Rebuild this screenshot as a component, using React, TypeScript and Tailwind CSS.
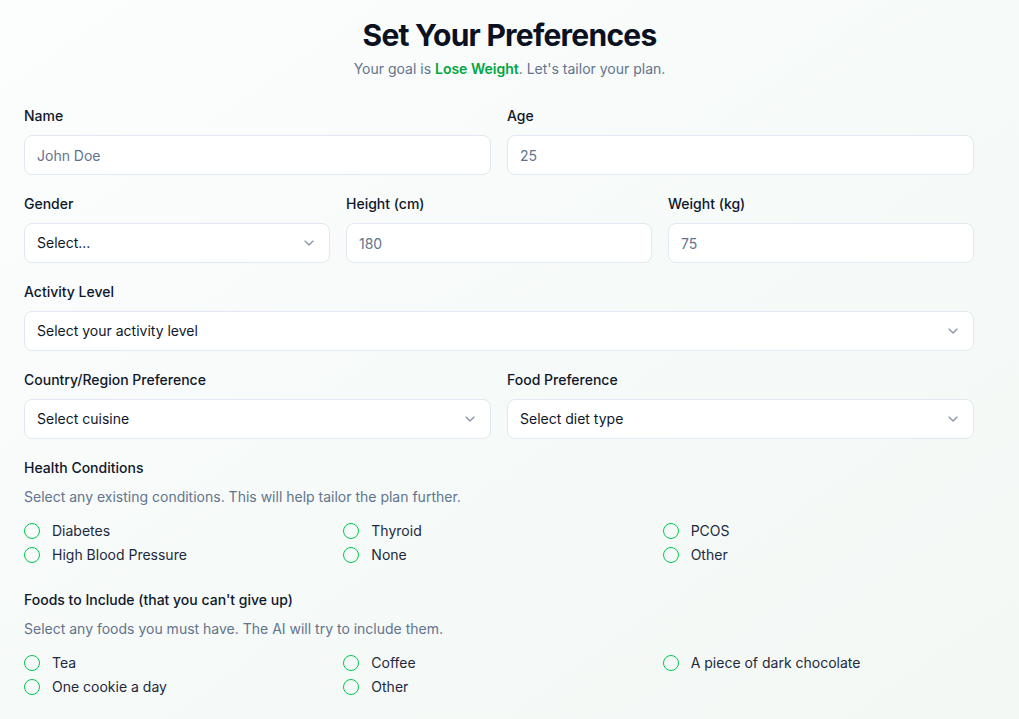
import { ChevronDown } from 'lucide-react'

const font = { fontFamily: 'Inter, "Noto Sans", sans-serif' }

function Label({ children }: { children: React.ReactNode }) {
  return (
    <label className="block text-sm leading-5 font-medium text-slate-900">
      {children}
    </label>
  )
}

function TextField({ label, placeholder }: { label: string; placeholder: string }) {
  return (
    <div>
      <Label>{label}</Label>
      <input
        className="mt-[9px] block h-10 w-full rounded-lg border border-slate-200 bg-white px-3 text-sm text-slate-900 placeholder:text-slate-500 outline-none"
        placeholder={placeholder}
      />
    </div>
  )
}

function SelectField({ label, value }: { label: string; value: string }) {
  return (
    <div>
      <Label>{label}</Label>
      <button className="mt-[9px] flex h-10 w-full items-center justify-between rounded-lg border border-slate-200 bg-white px-3 text-left text-sm text-slate-900">
        <span>{value}</span>
        <ChevronDown size={16} strokeWidth={1.75} className="text-slate-500 opacity-80" />
      </button>
    </div>
  )
}

function CheckGroup({
  title,
  hint,
  items,
}: {
  title: string
  hint: string
  items: string[]
}) {
  return (
    <div>
      <Label>{title}</Label>
      <p className="mt-[9px] text-sm leading-5 text-slate-500">{hint}</p>
      <div className="mt-[14px] grid grid-cols-3 gap-x-2 gap-y-1">
        {items.map((item) => (
          <div key={item} className="flex h-5 items-center gap-3">
            <span className="h-4 w-4 shrink-0 rounded-full border border-green-500" />
            <span className="text-sm text-slate-800">{item}</span>
          </div>
        ))}
      </div>
    </div>
  )
}

export default function App() {
  return (
    <div
      className="min-h-[719px] w-full bg-gradient-to-br from-[#fcfefd] via-[#f6faf8] to-[#f3f8f5]"
      style={font}
    >
      <div className="pt-[17px] text-center">
        <h1 className="text-3xl font-bold tracking-tight text-[#0b1120]">
          Set Your Preferences
        </h1>
        <p className="mt-[6px] text-sm text-slate-500">
          Your goal is <span className="font-semibold text-green-600">Lose Weight</span>. Let's tailor your plan.
        </p>
      </div>

      <div className="ml-6 mt-[27px] w-[950px] space-y-[19px]">
        <div className="grid grid-cols-2 gap-4">
          <TextField label="Name" placeholder="John Doe" />
          <TextField label="Age" placeholder="25" />
        </div>
        <div className="grid grid-cols-3 gap-4">
          <SelectField label="Gender" value="Select..." />
          <TextField label="Height (cm)" placeholder="180" />
          <TextField label="Weight (kg)" placeholder="75" />
        </div>
        <SelectField label="Activity Level" value="Select your activity level" />
        <div className="grid grid-cols-2 gap-4">
          <SelectField label="Country/Region Preference" value="Select cuisine" />
          <SelectField label="Food Preference" value="Select diet type" />
        </div>
        <CheckGroup
          title="Health Conditions"
          hint="Select any existing conditions. This will help tailor the plan further."
          items={['Diabetes', 'Thyroid', 'PCOS', 'High Blood Pressure', 'None', 'Other']}
        />
        <div className="pt-[6px]">
          <CheckGroup
            title="Foods to Include (that you can't give up)"
            hint="Select any foods you must have. The AI will try to include them."
            items={['Tea', 'Coffee', 'A piece of dark chocolate', 'One cookie a day', 'Other']}
          />
        </div>
      </div>
    </div>
  )
}
